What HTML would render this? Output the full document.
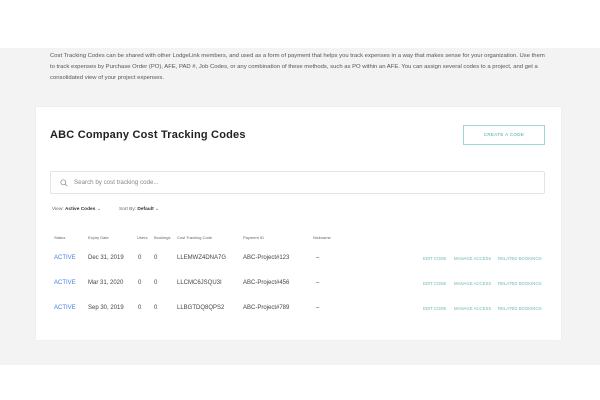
<!DOCTYPE html>
<html><head><style>
*{margin:0;padding:0;box-sizing:border-box}
body{width:600px;height:400px;background:#fff;font-family:"Liberation Sans",sans-serif;position:relative;overflow:hidden}
.gray{position:absolute;left:0;top:48px;width:600px;height:317px;background:#f4f3f4}
.p{position:absolute;left:50px;top:51px;width:500px;font-size:5.9px;line-height:11px;color:#555}
.card{position:absolute;left:36px;top:107px;width:525px;height:233px;background:#fff;box-shadow:0 0 2px rgba(0,0,0,.05)}
.a{position:absolute;white-space:nowrap}
h1{position:absolute;left:14px;top:22px;font-size:11px;font-weight:bold;color:#222;letter-spacing:.2px}
.btn{position:absolute;left:427px;top:18px;width:82px;height:20px;border:1px solid #9fd6d3;color:#4aa7a1;font-size:4.6px;text-align:center;line-height:18px;letter-spacing:.3px}
.search{position:absolute;left:14px;top:64px;width:495px;height:23px;border:1px solid #e4e4e4;border-radius:2px;font-size:6.2px;color:#888;padding-left:23px;line-height:21px}
.small{font-size:4.8px;color:#666}
.row{font-size:6px;color:#444}
.act{color:#4a7fe0}
.lnk{font-size:4.3px;color:#6fb9b4}
</style></head><body>
<div class="gray"></div>
<div class="p">Cost Tracking Codes can be shared with other LodgeLink members, and used as a form of payment that helps you track expenses in a way that makes sense for your organization. Use them to track expenses by Purchase Order (PO), AFE, PAD #, Job Codes, or any combination of these methods, such as PO within an AFE. You can assign several codes to a project, and get a consolidated view of your project expenses.</div>
<div class="card">
<h1>ABC Company Cost Tracking Codes</h1>
<div class="btn">CREATE A CODE</div>
<div class="search">Search by cost tracking code...
<svg style="position:absolute;left:9px;top:7px" width="8" height="8" viewBox="0 0 8 8"><circle cx="3.3" cy="3.3" r="2.5" fill="none" stroke="#888" stroke-width=".7"/><path d="M5.1 5.1L7.3 7.3" stroke="#888" stroke-width=".7"/></svg></div>
<div class="a small" style="left:16px;top:100px">View: <b style="color:#333">Active Codes</b> ⌄</div>
<div class="a small" style="left:83px;top:100px">Sort By: <b style="color:#333">Default</b> ⌄</div>
<div class="a small" style="left:18px;top:128px;font-size:4px">Status</div>
<div class="a small" style="left:52px;top:128px;font-size:4px">Expiry Date</div>
<div class="a small" style="left:101px;top:128px;font-size:4px">Users</div>
<div class="a small" style="left:118px;top:128px;font-size:4px">Bookings</div>
<div class="a small" style="left:141px;top:128px;font-size:4px">Cost Tracking Code</div>
<div class="a small" style="left:207px;top:128px;font-size:4px">Payment ID</div>
<div class="a small" style="left:277px;top:128px;font-size:4px">Nickname</div>
<div style="position:absolute;left:0;top:148px;width:525px">
<div class="a row act" style="left:18px;top:0">ACTIVE</div><div class="a row" style="left:52px;top:0">Dec 31, 2019</div><div class="a row" style="left:102px">0</div><div class="a row" style="left:118px">0</div><div class="a row" style="left:141px">LLEMWZ4DNA7G</div><div class="a row" style="left:207px">ABC-Project#123</div><div class="a row" style="left:280px">–</div>
<div class="a lnk" style="left:387px;top:1px">EDIT CODE</div><div class="a lnk" style="left:418px;top:1px">MANAGE ACCESS</div><div class="a lnk" style="left:462px;top:1px">RELATED BOOKINGS</div>
</div>
<div style="position:absolute;left:0;top:173px;width:525px">
<div class="a row act" style="left:18px">ACTIVE</div><div class="a row" style="left:52px">Mar 31, 2020</div><div class="a row" style="left:102px">0</div><div class="a row" style="left:118px">0</div><div class="a row" style="left:141px">LLCMC6JSQU3I</div><div class="a row" style="left:207px">ABC-Project#456</div><div class="a row" style="left:280px">–</div>
<div class="a lnk" style="left:387px;top:1px">EDIT CODE</div><div class="a lnk" style="left:418px;top:1px">MANAGE ACCESS</div><div class="a lnk" style="left:462px;top:1px">RELATED BOOKINGS</div>
</div>
<div style="position:absolute;left:0;top:198px;width:525px">
<div class="a row act" style="left:18px">ACTIVE</div><div class="a row" style="left:52px">Sep 30, 2019</div><div class="a row" style="left:102px">0</div><div class="a row" style="left:118px">0</div><div class="a row" style="left:141px">LLBGTDQ8QPS2</div><div class="a row" style="left:207px">ABC-Project#789</div><div class="a row" style="left:280px">–</div>
<div class="a lnk" style="left:387px;top:1px">EDIT CODE</div><div class="a lnk" style="left:418px;top:1px">MANAGE ACCESS</div><div class="a lnk" style="left:462px;top:1px">RELATED BOOKINGS</div>
</div>
</div>
</body></html>
